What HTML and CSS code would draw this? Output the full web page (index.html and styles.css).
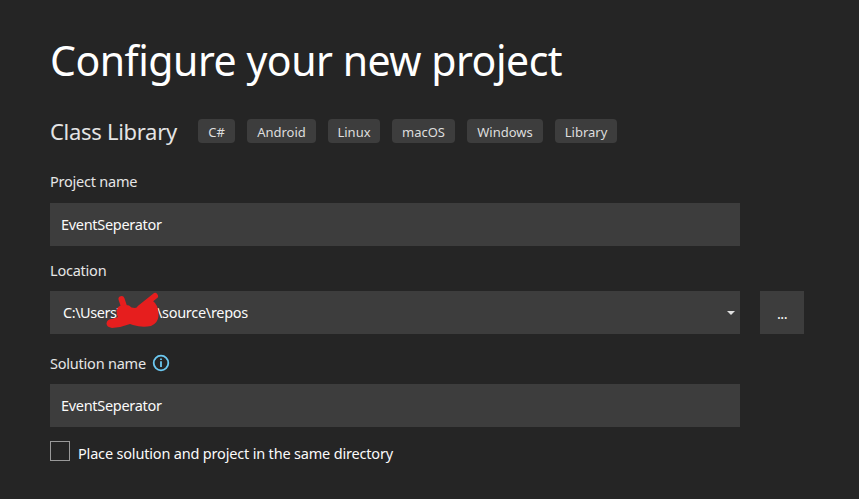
FILE: index.html
```html
<!DOCTYPE html>
<html lang="en">
<head>
<meta charset="utf-8">
<title>Configure your new project</title>
<link rel="stylesheet" href="styles.css">
</head>
<body>
<main class="dialog">
  <h1 class="title"><span>Configure your new project</span></h1>
  <div class="template">
    <h2 class="template-name"><span>Class Library</span></h2>
    <ul class="tags">
      <li class="tag tag-cs">C#</li>
      <li class="tag tag-android">Android</li>
      <li class="tag tag-linux">Linux</li>
      <li class="tag tag-macos">macOS</li>
      <li class="tag tag-windows">Windows</li>
      <li class="tag tag-library">Library</li>
    </ul>
  </div>
  <div class="label label-project"><span>Project name</span></div>
  <div class="field"><span>EventSeperator</span></div>
  <div class="label label-location"><span>Location</span></div>
  <div class="location-row">
    <div class="field combo">
      <span class="path-start">C:\Users\</span><span class="path-end">\source\repos</span>
      <svg class="scribble" width="56" height="38" viewBox="0 0 56 38" fill="none" stroke="#e61e1e" stroke-linecap="round" stroke-linejoin="round">
        <path stroke-width="6" d="M15.500 8l3 9M49 5L34 17"/>
        <path fill="#e61e1e" stroke="none" d="M11.500 17Q13 14 20 14L23 14.500Q25 17 29 17Q33 16 36 13L45 8L49 12Q53 17 52.500 25Q52 32 45 35Q36 37 27 34L24 33Q15 36.500 6 37Q.500 36 .500 32.500Q1 28 6 28L12 26Q9.500 21 11.500 17Z"/>
      </svg>
      <svg class="arrow" width="8" height="4" viewBox="0 0 8 4"><path fill="#e0e0e0" d="M0 0h8L4 4z"/></svg>
    </div>
    <button class="browse" type="button">...</button>
  </div>
  <div class="label label-solution"><span>Solution name</span>
    <svg class="info" width="18" height="18" viewBox="0 0 18 18"><circle cx="9" cy="9" r="7.3" fill="none" stroke="#6cc9f2" stroke-width="1.8"/><path fill="#6cc9f2" d="M8.100 4.400h1.800V6H8.100zM8.100 7.300h1.800v5.800H8.100z"/></svg>
  </div>
  <div class="field"><span>EventSeperator</span></div>
  <label class="check"><i class="box"></i><span>Place solution and project in the same directory</span></label>
</main>
</body>
</html>
```
FILE: styles.css
```css
* { box-sizing: border-box; }
body {
  margin: 0;
  background: #252525;
  color: #fafafa;
  font: 14.5px/20px "Noto Sans", "Open Sans", sans-serif;
}
.dialog { width: 859px; height: 499px; padding: 32px 55px 0 50px; overflow: hidden; white-space: nowrap; }
.title { margin: 0; font-size: 41px; line-height: 56px; font-weight: 400; letter-spacing: -0.48px; color: #fff; }
.template { display: flex; align-items: center; height: 30px; margin-top: 28px; }
.template-name { width: 148px; margin: 0; font-size: 22px; line-height: 30px; font-weight: 400; letter-spacing: -0.3px; color: #e4e4e4; }
.tags { display: flex; gap: 12px; margin: 0; padding: 0; list-style: none; }
.tag { height: 24px; border-radius: 4px; background: #3d3d3d; color: #dedede; font-size: 13px; line-height: 26px; text-align: center; }
.tag-cs { width: 37px; }
.tag-android { width: 69px; }
.tag-linux { width: 52px; }
.tag-macos { width: 63px; }
.tag-windows { width: 76px; }
.tag-library { width: 62px; }
.label { display: flex; align-items: center; height: 20px; color: #e6e6e6; letter-spacing: -0.22px; }
.label-project { margin: 25px 0 12px; }
.label-location { margin: 14px 0 11px; }
.label-solution { margin: 19px 0 11px; }
.field { display: flex; align-items: center; position: relative; width: 690px; height: 43px; padding: 0 0 2px 11px; background: #3d3d3d; letter-spacing: -0.3px; }
.location-row { display: flex; gap: 20px; }
.combo { padding-left: 13px; }
.path-start { width: 94px; letter-spacing: -0.45px; }
.path-end { letter-spacing: -0.3px; }
.scribble { position: absolute; left: 56px; top: 0; }
.arrow { position: absolute; left: 677px; top: 20px; }
.browse { width: 44px; height: 43px; padding: 1px 0 0; border: 0; background: #3d3d3d; color: #fafafa; font: inherit; letter-spacing: -0.6px; }
.info { margin-left: 6px; }
.check { display: flex; height: 24px; margin-top: 14px; }
.box { width: 20px; height: 20px; border: 1px solid #999; }
.check span { margin: 2px 0 0 8px; letter-spacing: -0.18px; }
```
